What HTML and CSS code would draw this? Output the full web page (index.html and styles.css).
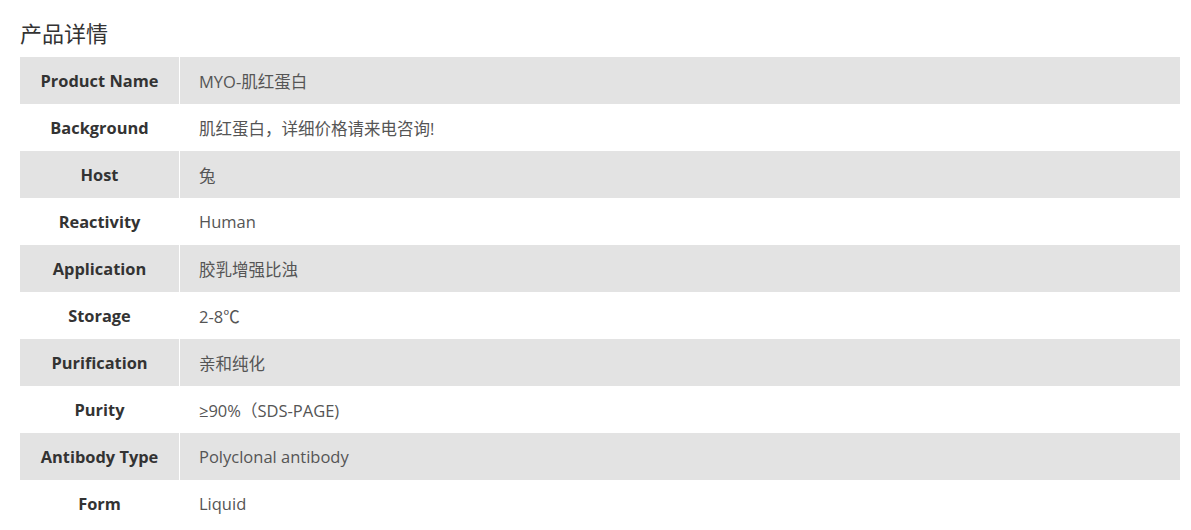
FILE: index.html
```html
<!DOCTYPE html>
<html lang="zh-CN">
<head>
<meta charset="utf-8">
<title>产品详情</title>
<link rel="stylesheet" href="styles.css">
</head>
<body>
<div class="page">
  <h2 class="title">产品详情</h2>
  <table class="spec">
    <tbody>
      <tr class="odd"><th>Product Name</th><td>MYO-肌红蛋白</td></tr>
      <tr><th>Background</th><td>肌红蛋白，详细价格请来电咨询!</td></tr>
      <tr class="odd"><th>Host</th><td>兔</td></tr>
      <tr><th>Reactivity</th><td>Human</td></tr>
      <tr class="odd"><th>Application</th><td>胶乳增强比浊</td></tr>
      <tr><th>Storage</th><td>2-8℃</td></tr>
      <tr class="odd"><th>Purification</th><td>亲和纯化</td></tr>
      <tr><th>Purity</th><td>≥90%（SDS-PAGE)</td></tr>
      <tr class="odd"><th>Antibody Type</th><td>Polyclonal antibody</td></tr>
      <tr><th>Form</th><td>Liquid</td></tr>
    </tbody>
  </table>
</div>
</body>
</html>
```

FILE: styles.css
```css
html, body {
  margin: 0;
  padding: 0;
  background: #fff;
}
body {
  font-family: "Open Sans", "Noto Sans CJK SC", sans-serif;
  color: #333;
}
.page {
  padding: 0 11px 0 20px;
}
.title {
  margin: 0;
  padding-top: 17px;
  height: 57px;
  box-sizing: border-box;
  font-size: 22px;
  line-height: 30px;
  font-weight: normal;
  color: #333;
  font-family: "Noto Sans CJK SC", sans-serif;
}
.spec {
  width: 1160px;
  border-collapse: collapse;
  font-size: 16px;
}
.spec tr {
  height: 47px;
}
.spec tr.odd {
  background: #e3e3e3;
}
.spec th {
  width: 159px;
  padding: 0;
  text-align: center;
  font-weight: bold;
  font-size: 16.4px;
  color: #333;
  border-right: 1px solid #fff;
}
.spec td {
  padding: 0 0 0 19px;
  text-align: left;
  font-size: 16.5px;
  color: #555;
}
```
